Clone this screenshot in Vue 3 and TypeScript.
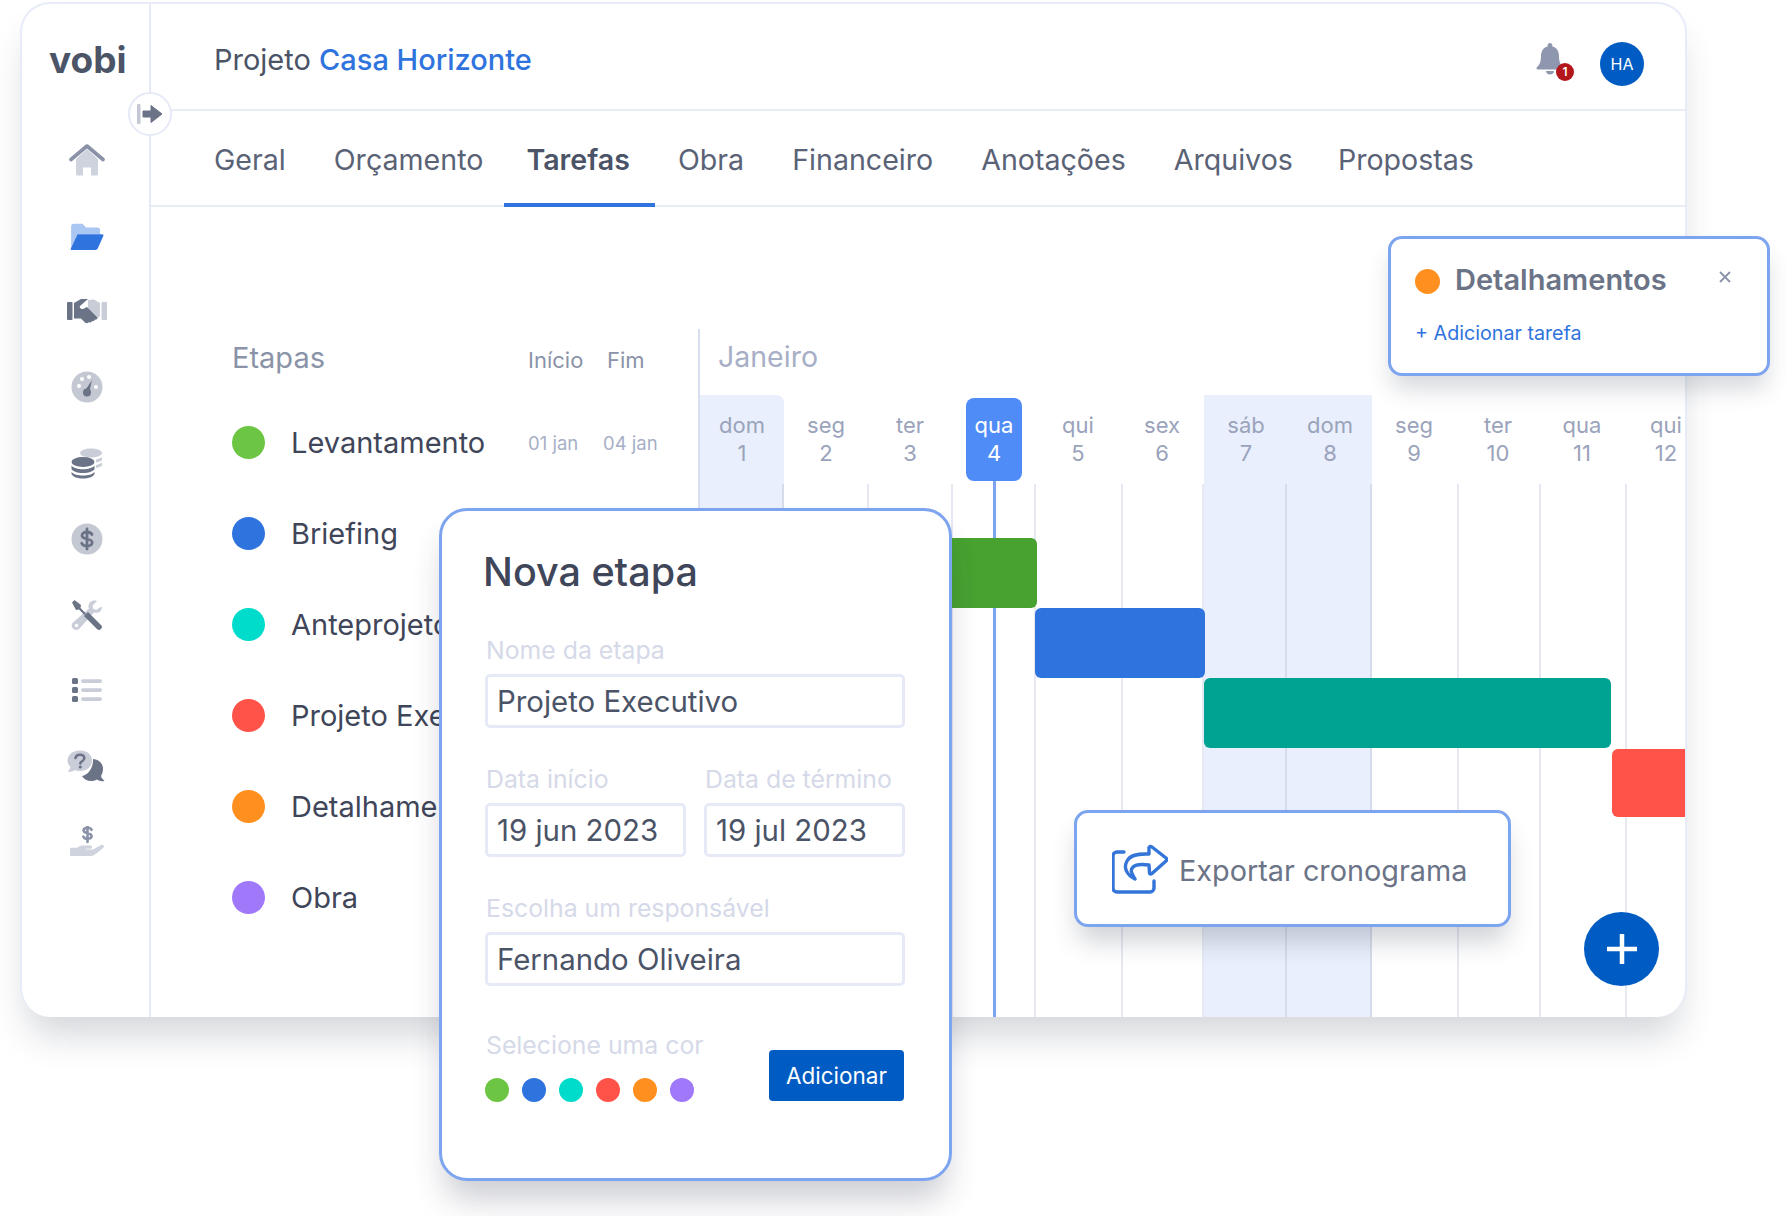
<script setup lang="ts">
interface Stage {
  name: string
  color: string
  start?: string
  end?: string
}

const tabs = ['Geral', 'Orçamento', 'Tarefas', 'Obra', 'Financeiro', 'Anotações', 'Arquivos', 'Propostas']

const stages: Stage[] = [
  { name: 'Levantamento', color: '#6cc644', start: '01 jan', end: '04 jan' },
  { name: 'Briefing', color: '#2f74de' },
  { name: 'Anteprojeto', color: '#00dccb' },
  { name: 'Projeto Executivo', color: '#ff5349' },
  { name: 'Detalhamentos', color: '#ff8f1f' },
  { name: 'Obra', color: '#a078fa' },
]

const days = [
  { label: 'dom', n: 1, off: true },
  { label: 'seg', n: 2 },
  { label: 'ter', n: 3 },
  { label: 'qua', n: 4, today: true },
  { label: 'qui', n: 5 },
  { label: 'sex', n: 6 },
  { label: 'sáb', n: 7, off: true },
  { label: 'dom', n: 8, off: true },
  { label: 'seg', n: 9 },
  { label: 'ter', n: 10 },
  { label: 'qua', n: 11 },
  { label: 'qui', n: 12 },
]

// the drawn grid lines are not evenly spaced in the chart
const columnWidths = [84, 85, 84, 83, 87, 81, 83, 85, 87, 82, 86, 84]

const bars = [
  { color: '#47a230', left: 0, width: 337, height: 70 },
  { color: '#2f74de', left: 335, width: 170, height: 70 },
  { color: '#00a392', left: 504, width: 407, height: 70 },
  { color: '#ff5349', left: 912, width: 110, height: 68 },
]

const swatches = stages.map((s) => s.color)
</script>

<template>
  <div class="stage">
    <div class="window">
      <aside class="sidebar">
        <div class="logo">vobi</div>
        <nav class="nav">
          <span class="nav-item">
            <svg viewBox="0 0 36 32" width="36" height="32">
              <path d="M7 15 18 5l11 10v15a1.500 1.500 0 0 1-1.500 1.500H22v-8h-8v8H8.500A1.500 1.500 0 0 1 7 30z" fill="#cfd3dd" />
              <path d="M2 15.500 18 2l16 13.500" fill="none" stroke="#8a92a8" stroke-width="3.600" stroke-linecap="round" stroke-linejoin="round" />
            </svg>
          </span>
          <span class="nav-item">
            <svg viewBox="0 0 36 30" width="36" height="28">
              <path d="M1 5a3 3 0 0 1 3-3h9l4 4h12a3 3 0 0 1 3 3v4H9L1 27z" fill="#aac6f3" />
              <path d="M8 13h26c1.300 0 2 1 1.500 2l-6 13.500c-.5 1-1.300 1.500-2.500 1.500H2c-1.200 0-1.800-1-1.300-2z" fill="#2f74de" />
            </svg>
          </span>
          <span class="nav-item">
            <svg viewBox="0 0 40 26" width="40" height="26">
              <rect x="0" y="4" width="5.500" height="18" rx="1" fill="#6b7387" />
              <rect x="34.500" y="4" width="5.500" height="18" rx="1" fill="#c9cdd8" />
              <path d="M21 2 27 1.500 33 5v13l-3 3-9-11z" fill="#c9cdd8" />
              <path d="M7 5 14 1h7l-8 7c-1 1.500 1 3.500 3 3l4-2 10 10c1 2-1 3-2 2.500-.5 1.500-2 2-3 1.500-.5 1.500-2 2-3 1-1 1.500-3 1.500-4 .5l-4-4H7z" fill="#6b7387" />
            </svg>
          </span>
          <span class="nav-item">
            <svg viewBox="0 0 32 32" width="32" height="32">
              <circle cx="16" cy="16" r="15.500" fill="#c4c8d2" />
              <circle cx="8" cy="15" r="2" fill="#fff" />
              <circle cx="11" cy="8" r="2" fill="#fff" />
              <circle cx="18" cy="6" r="2" fill="#fff" />
              <circle cx="25" cy="16" r="2" fill="#fff" />
              <path d="M21 9 18.500 20l-4-1z" fill="#6b7387" />
              <circle cx="16" cy="21.500" r="4" fill="#6b7387" />
            </svg>
          </span>
          <span class="nav-item">
            <svg viewBox="0 0 32 32" width="32" height="32">
              <ellipse cx="20" cy="6" rx="11" ry="4.500" fill="#c9cdd8" />
              <path d="M25 12.500c2.500-.5 4.500-1.300 6-2.500v3c-1 1-3 2-6 2.500zM25 18c2.500-.5 4.500-1.300 6-2.500v3c-1 1-3 2-6 2.500z" fill="#c9cdd8" />
              <ellipse cx="12" cy="15" rx="11.500" ry="5" fill="#6b7387" />
              <path d="M.5 18.500c2 2.500 6.500 3.700 11.500 3.700s9.500-1.200 11.500-3.700V22c-1.500 2.500-6 4-11.500 4S2 24.500.5 22z" fill="#6b7387" />
              <path d="M.5 25c2 2.500 6.500 3.500 11.500 3.500s9.500-1 11.500-3.500v2c-1.500 3-6 4.500-11.500 4.500S2 30 .5 27z" fill="#6b7387" />
            </svg>
          </span>
          <span class="nav-item">
            <svg viewBox="0 0 32 32" width="32" height="32">
              <circle cx="16" cy="16" r="15.500" fill="#c4c8d2" />
              <path d="M21 11.500c-.8-1.500-2.800-2.500-5-2.500-2.700 0-5 1.300-5 3.500 0 4.800 10.200 2.200 10.200 7 0 2.200-2.400 3.500-5.200 3.500-2.300 0-4.400-1-5.300-2.700M16 6v20" fill="none" stroke="#6b7387" stroke-width="2.800" stroke-linecap="round" />
            </svg>
          </span>
          <span class="nav-item">
            <svg viewBox="0 0 32 32" width="32" height="32">
              <path d="M30.500 7.500 25 11l-3-1.500-.5-3L26 2c-3.500-1.500-8 .5-8.500 4.500-.1 1 0 2 .5 3L2 23.500C-.5 26 1 29 2.500 30s4 1.500 6-.5L23 13.500c4.500 1.500 9-2 7.500-6z" fill="#c9cdd8" />
              <circle cx="5.500" cy="26.500" r="1.700" fill="#fff" />
              <path d="M1 3.500 3.500 1l6.500 5-.5 3 5.500 5.500-1.500 1.500L8 10.500l-3 .5z" fill="#6b7387" />
              <path d="m13 17 4-4 13 13c1.300 1.300 1.300 2.200.5 3.200l-1.300 1.300c-1 .8-2 .8-3.200-.5z" fill="#6b7387" />
            </svg>
          </span>
          <span class="nav-item">
            <svg viewBox="0 0 32 26" width="32" height="26">
              <rect x="1" y="1" width="6" height="6" rx="1.500" fill="#6b7387" />
              <rect x="1" y="10" width="6" height="6" rx="1.500" fill="#6b7387" />
              <rect x="1" y="19" width="6" height="6" rx="1.500" fill="#6b7387" />
              <rect x="10" y="2.300" width="21" height="3.600" rx="1.800" fill="#c9cdd8" />
              <rect x="10" y="11.300" width="21" height="3.600" rx="1.800" fill="#c9cdd8" />
              <rect x="10" y="20.300" width="21" height="3.600" rx="1.800" fill="#c9cdd8" />
            </svg>
          </span>
          <span class="nav-item">
            <svg viewBox="0 0 40 32" width="40" height="32">
              <path d="M26 9c6 .5 10 4.500 10 10 0 3-1 5-2 7 .5 2 2 3.500 3.500 5-3 .5-5.500 0-7.500-1.500-6 3-12 1.500-15-3.500 6-1 11.500-8 11-17z" fill="#6b7387" />
              <path d="M13 .5C20 .5 25 4.500 25 10.500S20 21 13 21c-2 0-3.500-.3-5-1-2 1.500-5 2-7.500 1.800C2 20.500 3 19 3.500 17 1.500 15 .5 13 .5 10.500 .5 4.500 6 .5 13 .5z" fill="#c9cdd8" />
              <path d="M8.500 8c.5-2 2.300-3.200 4.500-3.200 2.500 0 4.300 1.400 4.300 3.400 0 3-4 3-4 5.300" fill="none" stroke="#6b7387" stroke-width="2.500" stroke-linecap="round" />
              <circle cx="13.300" cy="17" r="1.600" fill="#6b7387" />
            </svg>
          </span>
          <span class="nav-item">
            <svg viewBox="0 0 36 32" width="36" height="32">
              <path d="M22.500 3.800c-.5-1.200-1.900-2-3.900-2-2.300 0-4 1-4 2.800 0 3.700 8 1.700 8 5.400 0 1.800-1.700 2.800-4 2.800-2.100 0-3.600-.8-4.200-2.100M18.500 0v16" fill="none" stroke="#8a92a8" stroke-width="2.600" stroke-linecap="round" />
              <path d="M1 23c0-.8.500-1.200 1.200-1.200H8c2-1.800 4-2.300 6-2.300h7.500c2 0 2 3.200 0 3.200H17l0 .8h7L32 19c2-1 4 1 2.500 2.500-3.500 3.500-6.500 5.500-9.500 7.500-1 .7-2 1-3.500 1H2.200C1.500 30 1 29.500 1 29z" fill="#cfd3dd" />
            </svg>
          </span>
        </nav>
      </aside>

      <div class="main">
        <header class="topbar">
          <h1 class="project">Projeto <span>Casa Horizonte</span></h1>
          <div class="actions">
            <div class="bell">
              <svg viewBox="0 0 28 32" width="28" height="32">
                <path d="M14 0c1.400 0 2.400 1 2.400 2.400v1C21 4.500 23 8.500 23 13c0 6 1.500 9 4 11 1 1 .5 2.500-1 2.500H2c-1.500 0-2-1.500-1-2.500 2.500-2 4-5 4-11 0-4.500 2-8.500 6.600-9.600v-1C11.600 1 12.600 0 14 0z" fill="#8e97ae" />
                <path d="M10 28h8c0 2.200-1.800 3.600-4 3.600s-4-1.400-4-3.600z" fill="#8e97ae" />
              </svg>
              <span class="badge">1</span>
            </div>
            <div class="avatar">HA</div>
          </div>
        </header>

        <nav class="tabs">
          <a v-for="tab in tabs" :key="tab" class="tab" :class="{ active: tab === 'Tarefas' }">{{ tab }}</a>
        </nav>

        <section class="content">
          <div class="list">
            <div class="list-head">
              <span class="list-title">Etapas</span>
              <span class="col-start">Início</span>
              <span class="col-end">Fim</span>
            </div>
            <div v-for="s in stages" :key="s.name" class="row">
              <i class="dot" :style="{ background: s.color }"></i>
              <span class="row-name">{{ s.name }}</span>
              <span v-if="s.start" class="row-start">{{ s.start }}</span>
              <span v-if="s.end" class="row-end">{{ s.end }}</span>
            </div>
          </div>

          <div class="gantt">
            <div class="month">Janeiro</div>
            <div class="days">
              <div v-for="d in days" :key="d.n" class="day" :class="{ off: d.off, today: d.today }">
                <span>{{ d.label }}</span>
                <span>{{ d.n }}</span>
              </div>
            </div>
            <div class="body">
              <div class="columns">
                <div
                  v-for="(d, i) in days"
                  :key="d.n"
                  class="column"
                  :class="{ off: d.off }"
                  :style="{ width: columnWidths[i] + 'px' }"
                ></div>
              </div>
              <div class="today-line"></div>
              <div v-for="b in bars" :key="b.color" class="bar-row">
                <div
                  class="bar"
                  :style="{ background: b.color, marginLeft: b.left + 'px', width: b.width + 'px', height: b.height + 'px' }"
                ></div>
              </div>
            </div>
          </div>
        </section>
      </div>
    </div>

    <button class="collapse" type="button">
      <svg viewBox="0 0 26 22" width="26" height="22">
        <rect x="0" y="1" width="3.500" height="20" rx="1" fill="#c4c8d2" />
        <path d="M6 8h8V2.500L25 11 14 19.500V14H6z" fill="#6b7387" stroke="#6b7387" stroke-linejoin="round" />
      </svg>
    </button>

    <div class="details">
      <div class="details-head">
        <i class="details-dot"></i>
        <span class="details-title">Detalhamentos</span>
        <svg class="details-close" viewBox="0 0 12 12" width="12" height="12">
          <path d="M1 1l10 10M11 1 1 11" stroke="#8a92a8" stroke-width="1.800" />
        </svg>
      </div>
      <a class="details-add">+ Adicionar tarefa</a>
    </div>

    <div class="export">
      <svg viewBox="0 0 56 50" width="56" height="50" fill="none" stroke="#3375d8" stroke-width="3.400" stroke-linecap="round" stroke-linejoin="round">
        <path d="M12 8H5a4 4 0 0 0-4 4v32a4 4 0 0 0 4 4h33a4 4 0 0 0 4-4v-7" />
        <path d="M23 35C15 31 11 24 15 17c3-6 10-7.500 22-7l0-6.500q1-2 3-.5l14 11q1.500 1.500 0 3L40 29.500q-2 1.500-2.500-.5L37 21c-7-1-13-1-16 2-3 3-2 5 2 12z" />
      </svg>
      <span>Exportar cronograma</span>
    </div>

    <button class="fab" type="button">
      <svg viewBox="0 0 30 30" width="30" height="30">
        <path d="M15 0v30M0 15h30" stroke="#fff" stroke-width="4.500" />
      </svg>
    </button>

    <form class="modal" @submit.prevent>
      <h2>Nova etapa</h2>
      <label class="field">
        <span>Nome da etapa</span>
        <input value="Projeto Executivo" />
      </label>
      <div class="field-pair">
        <label class="field">
          <span>Data início</span>
          <input value="19 jun 2023" />
        </label>
        <label class="field">
          <span>Data de término</span>
          <input value="19 jul 2023" />
        </label>
      </div>
      <label class="field">
        <span>Escolha um responsável</span>
        <input value="Fernando Oliveira" />
      </label>
      <div class="modal-foot">
        <div>
          <span class="foot-label">Selecione uma cor</span>
          <div class="swatches">
            <i v-for="c in swatches" :key="c" :style="{ background: c }"></i>
          </div>
        </div>
        <button class="submit" type="submit">Adicionar</button>
      </div>
    </form>
  </div>
</template>

<style scoped>
.stage {
  position: relative;
  width: 1787px;
  height: 1216px;
  padding: 2px 0 0 20px;
  box-sizing: border-box;
  overflow: hidden;
  background: #fff;
  font-family: Inter, "Noto Sans", sans-serif;
  color: #4b5367;
}

.window {
  display: flex;
  width: 1667px;
  height: 1015px;
  box-sizing: border-box;
  border: 2px solid #e8ecf8;
  border-bottom: 0;
  border-radius: 30px;
  background: #fff;
  overflow: hidden;
  box-shadow: 0 26px 36px -8px rgba(40, 48, 70, 0.2);
}

.sidebar {
  flex: none;
  width: 129px;
  box-sizing: border-box;
  border-right: 2px solid #e4eaf6;
}

.logo {
  margin-top: 33px;
  padding-left: 27px;
  font-size: 37px;
  line-height: 46px;
  font-weight: 700;
  color: #4c5467;
}

.nav {
  display: flex;
  flex-direction: column;
  align-items: center;
  margin-top: 39px;
  padding-left: 3px;
}

.nav-item {
  flex: none;
  height: 75.800px;
  display: flex;
  align-items: center;
  justify-content: center;
}

.main {
  flex: 1;
  min-width: 0;
  display: flex;
  flex-direction: column;
}

.topbar {
  flex: none;
  height: 107px;
  box-sizing: border-box;
  display: flex;
  align-items: center;
  justify-content: space-between;
  padding: 0 41px 0 63px;
  border-bottom: 2px solid #e8ecf5;
}

.project {
  margin: 5px 0 0;
  font-size: 29px;
  font-weight: 400;
  color: #4b5367;
}

.project span {
  color: #2f74de;
  font-weight: 500;
}

.actions {
  display: flex;
  align-items: center;
  gap: 32px;
  margin-top: 14px;
}

.bell {
  position: relative;
  width: 32px;
  height: 32px;
  margin-top: -9px;
}

.badge {
  position: absolute;
  right: -6px;
  bottom: -6px;
  width: 18px;
  height: 18px;
  border-radius: 50%;
  background: #b3161b;
  color: #fff;
  font-size: 12px;
  font-weight: 600;
  line-height: 18px;
  text-align: center;
}

.avatar {
  width: 44px;
  height: 44px;
  border-radius: 50%;
  background: #005cc2;
  color: #fff;
  font-size: 16px;
  line-height: 44px;
  text-align: center;
}

.tabs {
  flex: none;
  display: flex;
  height: 96px;
  box-sizing: border-box;
  padding-left: 41px;
  gap: 4px;
  border-bottom: 2px solid #e8ecf5;
}

.tab {
  display: flex;
  align-items: center;
  padding: 4px 22px 0;
  margin-bottom: -2px;
  border-bottom: 4px solid transparent;
  font-size: 28.600px;
  color: #5a6276;
}

.tab.active {
  margin-left: -5px;
  margin-right: -3px;
  padding-right: 25px;
  font-weight: 600;
  color: #4b5367;
  border-bottom-color: #2f74de;
}

.tab:last-child {
  margin-left: -3px;
}

.content {
  flex: 1;
  min-height: 0;
  display: flex;
  padding-top: 122px;
}

.list {
  flex: none;
  width: 547px;
  box-sizing: border-box;
  padding-left: 81px;
}

.list-head {
  position: relative;
  height: 68px;
  font-size: 22px;
  line-height: 58px;
  color: #8a93a8;
}

.list-title {
  font-size: 29px;
}

.col-start {
  position: absolute;
  left: 296px;
  margin-top: 2px;
}

.col-end {
  position: absolute;
  left: 375px;
  margin-top: 2px;
}

.row {
  position: relative;
  display: flex;
  align-items: center;
  height: 91px;
}

.dot {
  flex: none;
  width: 33px;
  height: 33px;
  border-radius: 50%;
  margin-right: 26px;
}

.row-name {
  font-size: 29px;
  color: #3f4659;
}

.row-start,
.row-end {
  position: absolute;
  font-size: 18.500px;
  color: #a7afc6;
}

.row-start {
  left: 296px;
}

.row-end {
  left: 371px;
}

.gantt {
  flex: none;
  position: relative;
  width: 1008px;
  display: flex;
  flex-direction: column;
  border-left: 2px solid #d6deef;
}

.month {
  flex: none;
  height: 66px;
  padding-left: 18px;
  font-size: 28.500px;
  line-height: 56px;
  color: #a7afc6;
}

.days {
  flex: none;
  display: flex;
  height: 89px;
  align-items: flex-start;
}

.day {
  flex: none;
  position: relative;
  width: 84px;
  height: 89px;
  box-sizing: border-box;
  padding-top: 16px;
  display: flex;
  flex-direction: column;
  align-items: center;
  font-size: 22px;
  line-height: 28px;
  color: #9aa3bb;
}

.day.off {
  background: #e9effc;
}

.day:first-child {
  border-top-right-radius: 8px;
}

.day.today {
  color: #fff;
}

.day.today::before {
  content: '';
  position: absolute;
  z-index: 0;
  top: 3px;
  bottom: 3px;
  left: 14px;
  right: 14px;
  border-radius: 8px;
  background: #4f8cf7;
}

.day span {
  position: relative;
}

.body {
  flex: 1;
  position: relative;
  padding-top: 54px;
}

.columns {
  position: absolute;
  inset: 0;
  display: flex;
}

.column {
  flex: none;
  box-sizing: border-box;
  border-right: 2px solid #e6e9f2;
}

.column.off {
  background: #e9effc;
  border-right-color: #d6dceb;
}

.today-line {
  position: absolute;
  top: -3px;
  bottom: 0;
  left: 293px;
  width: 3px;
  background: #7da4ef;
}

.bar-row {
  position: relative;
  height: 70px;
}

.bar-row:last-child {
  padding-top: 1px;
}

.bar {
  border-radius: 6px;
}

.collapse {
  position: absolute;
  left: 128px;
  top: 92px;
  width: 44px;
  height: 44px;
  padding: 0;
  display: flex;
  align-items: center;
  justify-content: center;
  border: 2px solid #e6eaf6;
  border-radius: 50%;
  background: #fff;
}

.details {
  position: absolute;
  left: 1388px;
  top: 236px;
  width: 382px;
  height: 140px;
  box-sizing: border-box;
  padding: 23px 25px 0 24px;
  border: 3px solid #7da4ef;
  border-radius: 14px;
  background: #fff;
  box-shadow: 0 16px 24px -4px rgba(40, 48, 70, 0.2);
}

.details-head {
  display: flex;
  align-items: center;
}

.details-dot {
  flex: none;
  width: 25px;
  height: 25px;
  margin-top: 3px;
  border-radius: 50%;
  background: #ff8f1f;
  margin-right: 15px;
}

.details-title {
  font-size: 29px;
  font-weight: 600;
  color: #6b7387;
}

.details-close {
  margin-left: auto;
  margin-right: 11px;
  margin-top: -6px;
}

.details-add {
  display: block;
  margin-top: 24px;
  font-size: 19.700px;
  color: #2f74de;
}

.export {
  position: absolute;
  left: 1074px;
  top: 810px;
  width: 437px;
  height: 117px;
  box-sizing: border-box;
  display: flex;
  align-items: center;
  gap: 11px;
  padding-left: 35px;
  border: 3px solid #7da4ef;
  border-radius: 14px;
  background: #fff;
  font-size: 28.800px;
  color: #6b7387;
  box-shadow: 0 18px 26px -4px rgba(40, 48, 70, 0.22);
}

.export span {
  margin-top: 4px;
}

.fab {
  position: absolute;
  left: 1584px;
  top: 912px;
  width: 75px;
  height: 74px;
  padding: 0;
  border: 0;
  border-radius: 50%;
  background: #005cc2;
  display: flex;
  align-items: center;
  justify-content: center;
}

.modal {
  position: absolute;
  left: 439px;
  top: 508px;
  width: 513px;
  height: 673px;
  box-sizing: border-box;
  padding: 38px 44px 0 43px;
  border: 3px solid #7da4ef;
  border-radius: 28px;
  background: #fff;
  box-shadow: 0 24px 32px -6px rgba(40, 48, 70, 0.24);
}

.modal h2 {
  margin: 0 0 40px -2px;
  font-size: 39.500px;
  line-height: 46px;
  font-weight: 500;
  color: #3f4659;
}

.field {
  display: block;
  margin-bottom: 36px;
}

.field > span,
.foot-label {
  display: block;
  margin-bottom: 9px;
  padding-left: 1px;
  font-size: 24.800px;
  line-height: 30px;
  color: #d5d9e8;
}

.field input {
  display: block;
  width: 100%;
  height: 54px;
  box-sizing: border-box;
  padding: 0 9px;
  border: 3px solid #e6eaf6;
  border-radius: 5px;
  font: inherit;
  font-size: 29.400px;
  color: #4b5367;
  outline: none;
}

.field-pair {
  display: grid;
  grid-template-columns: 201px 201px;
  gap: 18px;
}

.modal-foot {
  display: flex;
  align-items: flex-start;
  justify-content: space-between;
  margin-top: 44px;
}

.foot-label {
  margin-bottom: 18px;
}

.swatches {
  display: flex;
  gap: 13px;
}

.swatches i {
  width: 24px;
  height: 24px;
  border-radius: 50%;
}

.submit {
  margin-top: 20px;
  margin-right: 1px;
  width: 135px;
  height: 51px;
  border: 0;
  border-radius: 4px;
  background: #005cc2;
  color: #fff;
  font: inherit;
  font-size: 22.500px;
}
</style>

<style>
body {
  margin: 0;
  background: #fff;
}
</style>
